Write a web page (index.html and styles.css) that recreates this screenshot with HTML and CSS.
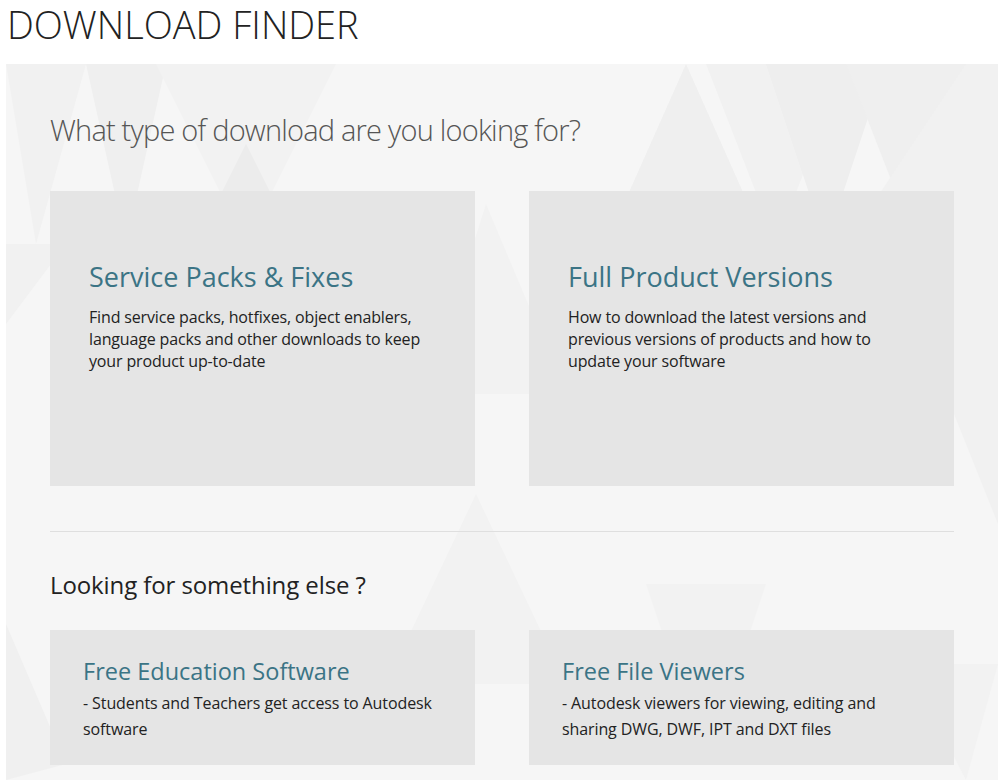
FILE: index.html
```html
<!DOCTYPE html>
<html lang="en">
<head>
<meta charset="utf-8">
<title>Download Finder</title>
<link rel="stylesheet" href="styles.css">
</head>
<body>
<h1 class="page-title">DOWNLOAD FINDER</h1>
<section class="finder">
  <svg class="pattern" viewBox="0 0 992 716" preserveAspectRatio="none" aria-hidden="true">
    <polygon points="0,0 80,0 30,180" fill="#f1f1f1"/>
    <polygon points="80,0 160,0 120,180 " fill="#efefef"/>
    <polygon points="150,0 330,0 240,180" fill="#f2f2f2"/>
    <polygon points="0,180 60,180 0,260" fill="#f1f1f1"/>
    <polygon points="240,80 290,180 190,180" fill="#ececec"/>
    <polygon points="260,180 380,180 320,330" fill="#f2f2f2"/>
    <polygon points="480,140 560,330 420,330" fill="#f2f2f2"/>
    <polygon points="680,0 760,180 600,180" fill="#efefef"/>
    <polygon points="700,0 840,0 770,180" fill="#f1f1f1"/>
    <polygon points="760,0 820,180 880,0" fill="#eeeeee"/>
    <polygon points="840,0 990,0 910,180" fill="#efefef"/>
    <polygon points="840,180 992,180 992,0 960,0" fill="#f1f1f1"/>
    <polygon points="560,180 640,180 600,300" fill="#f0f0f0"/>
    <polygon points="880,180 992,180 992,460" fill="#f1f1f1"/>
    <polygon points="470,430 560,620 380,620" fill="#f2f2f2"/>
    <polygon points="640,520 760,520 700,700" fill="#f2f2f2"/>
    <polygon points="0,560 60,700 0,716" fill="#f0f0f0"/>
    <polygon points="900,600 992,600 960,716" fill="#f2f2f2"/>
  </svg>
  <div class="finder-inner">
    <h2 class="question">What type of download are you looking for?</h2>
    <div class="cards">
      <a class="card" href="#">
        <h3 class="card-title">Service Packs &amp; Fixes</h3>
        <p class="card-text">Find service packs, hotfixes, object enablers, language packs and other downloads to keep your product up-to-date</p>
      </a>
      <a class="card" href="#">
        <h3 class="card-title">Full Product Versions</h3>
        <p class="card-text">How to download the latest versions and previous versions of products and how to update your software</p>
      </a>
    </div>
    <hr class="divider">
    <h2 class="else">Looking for something else ?</h2>
    <div class="cards small">
      <a class="mini" href="#">
        <h3 class="mini-title">Free Education Software</h3>
        <p class="mini-text">- Students and Teachers get access to Autodesk software</p>
      </a>
      <a class="mini" href="#">
        <h3 class="mini-title">Free File Viewers</h3>
        <p class="mini-text">- Autodesk viewers for viewing, editing and sharing DWG, DWF, IPT and DXT files</p>
      </a>
    </div>
  </div>
</section>
</body>
</html>
```
FILE: styles.css
```css
html, body {
  margin: 0;
  padding: 0;
  background: #ffffff;
  font-family: "Open Sans", "Noto Sans", sans-serif;
  color: #222;
}
body {
  padding: 0 5px 0 6px;
}
.page-title {
  margin: 0;
  padding: 0 0 0 1px;
  height: 64px;
  font-size: 38px;
  line-height: 48px;
  font-weight: 300;
  color: #222;
}
.finder {
  position: relative;
  background: #f6f6f6;
  overflow: hidden;
  min-height: 716px;
}
.pattern {
  position: absolute;
  inset: 0;
  width: 100%;
  height: 100%;
}
.finder-inner {
  position: relative;
  padding: 45px 44px 0 44px;
}
.question {
  margin: 0;
  font-size: 29px;
  line-height: 42px;
  font-weight: 300;
  color: #555;
  letter-spacing: -0.8px;
}
.cards {
  display: flex;
  gap: 54px;
  margin-top: 40px;
}
.card, .mini {
  flex: 1;
  background: #e5e5e5;
  text-decoration: none;
  color: #222;
  box-sizing: border-box;
}
.card {
  height: 295px;
  padding: 66px 30px 0 39px;
}
.card-title {
  margin: 0;
  font-size: 27px;
  line-height: 40px;
  font-weight: 400;
  color: #3b7485;
}
.card-text {
  margin: 9px 0 0;
  font-size: 16px;
  line-height: 22px;
  letter-spacing: -0.15px;
  color: #222;
}
.divider {
  border: 0;
  border-top: 1px solid #dfdfdf;
  margin: 45px 0 0;
}
.else {
  margin: 36px 0 0;
  font-size: 24px;
  line-height: 34px;
  font-weight: 400;
  color: #222;
  letter-spacing: -0.1px;
}
.cards.small {
  margin-top: 28px;
}
.mini {
  height: 135px;
  padding: 23px 20px 0 33px;
}
.mini-title {
  margin: 0;
  font-size: 23.5px;
  line-height: 36px;
  font-weight: 400;
  color: #3b7485;
}
.mini-text {
  margin: 1px 0 0;
  font-size: 16px;
  line-height: 26px;
  letter-spacing: -0.1px;
  color: #222;
}
```
